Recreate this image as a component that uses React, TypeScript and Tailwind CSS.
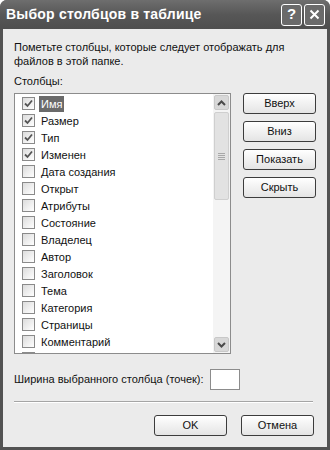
const columns = [
  { name: 'Имя', checked: true },
  { name: 'Размер', checked: true },
  { name: 'Тип', checked: true },
  { name: 'Изменен', checked: true },
  { name: 'Дата создания', checked: false },
  { name: 'Открыт', checked: false },
  { name: 'Атрибуты', checked: false },
  { name: 'Состояние', checked: false },
  { name: 'Владелец', checked: false },
  { name: 'Автор', checked: false },
  { name: 'Заголовок', checked: false },
  { name: 'Тема', checked: false },
  { name: 'Категория', checked: false },
  { name: 'Страницы', checked: false },
  { name: 'Комментарий', checked: false },
  // partially scrolled out, only the box top shows
  { name: '', checked: false },
];

function CheckBox({ checked }: { checked: boolean }) {
  return (
    <span className="w-[13px] h-[13px] shrink-0 border border-[#8a8a8a] bg-gradient-to-br from-[#dcdcdc] to-white flex items-center justify-center">
      {checked && (
        <svg width="9" height="9" viewBox="0 0 9 9">
          <path d="M1 4.5 L3.5 7 L8 1.5" fill="none" stroke="#555" strokeWidth="1.8" />
        </svg>
      )}
    </span>
  );
}

function Button({ children, className = '' }: { children: React.ReactNode; className?: string }) {
  return (
    <button className={`h-[21px] w-[73px] rounded-[3px] border border-[#3c3c3c] bg-gradient-to-b from-white to-[#e4e4e4] text-[11px] text-[#111] flex items-center justify-center ${className}`}>
      {children}
    </button>
  );
}

function ScrollArrow({ up }: { up: boolean }) {
  return (
    <div className="h-[15px] w-[15px] rounded-[2px] border border-[#c8c8c8] bg-[#d8d8d8] flex items-center justify-center">
      <svg width="9" height="6" viewBox="0 0 9 6">
        <path d={up ? 'M1 5 L4.5 1.5 L8 5' : 'M1 1 L4.5 4.5 L8 1'} fill="none" stroke="#4a4a4a" strokeWidth="2" />
      </svg>
    </div>
  );
}

export default function App() {
  return (
    <div className="w-[330px] h-[450px] bg-[#525252] rounded-t-[7px] flex flex-col overflow-hidden [font-family:'Liberation_Sans',Arial,sans-serif]">
      {/* Title bar */}
      <div className="h-[29px] shrink-0 flex items-center pl-[6px] pr-[5px] bg-gradient-to-b from-[#6e6e6e] via-[#575757] to-[#4e4e4e]">
        <span className="flex-1 text-white font-bold text-[14px] tracking-[0.2px]">Выбор столбцов в таблице</span>
        <div className="flex gap-[2px]">
          <div className="w-[21px] h-[22px] rounded-[3px] border border-white bg-[#6a6a6a] flex items-center justify-center text-white font-bold text-[15px]">?</div>
          <div className="w-[21px] h-[22px] rounded-[3px] border border-white bg-[#6a6a6a] flex items-center justify-center">
            <svg width="11" height="11" viewBox="0 0 11 11">
              <path d="M1.5 1.5 L9.5 9.5 M9.5 1.5 L1.5 9.5" stroke="white" strokeWidth="2" />
            </svg>
          </div>
        </div>
      </div>

      {/* Body */}
      <div className="flex-1 mx-[3px] mb-[3px] bg-[#ebebeb] px-[11px] pt-[11px] flex flex-col text-[11px] text-[#111]">
        <p className="leading-[14px]">
          Пометьте столбцы, которые следует отображать для
          <br />
          файлов в этой папке.
        </p>
        <div className="mt-[6px] leading-[14px]">Столбцы:</div>

        <div className="mt-[5px] flex gap-[12px]">
          {/* List */}
          <div className="w-[217px] h-[261px] border border-[#8c8c8c] bg-white flex overflow-hidden">
            <div className="flex-1 pt-[1px] pl-[7px] overflow-hidden">
              {columns.map((c, i) => (
                <div key={i} className="h-[17px] flex items-center gap-[4px]">
                  <CheckBox checked={c.checked} />
                  {c.name && (
                    <span className={`px-[2px] leading-[16px] ${i === 0 ? 'bg-[#6a6a6a] text-white' : ''}`}>{c.name}</span>
                  )}
                </div>
              ))}
            </div>
            <div className="w-[17px] py-[1px] pr-[1px] bg-[#f4f4f4] flex flex-col items-center">
              <ScrollArrow up />
              <div className="mt-[2px] h-[88px] w-[15px] rounded-[2px] border border-[#cfcfcf] bg-[#e2e2e2] flex flex-col items-center justify-center gap-[1px]">
                <span className="w-[7px] h-px bg-[#a8a8a8]" />
                <span className="w-[7px] h-px bg-[#a8a8a8]" />
                <span className="w-[7px] h-px bg-[#a8a8a8]" />
                <span className="w-[7px] h-px bg-[#a8a8a8]" />
              </div>
              <div className="flex-1" />
              <ScrollArrow up={false} />
            </div>
          </div>

          {/* Side buttons */}
          <div className="flex flex-col gap-[7px]">
            <Button>Вверх</Button>
            <Button>Вниз</Button>
            <Button>Показать</Button>
            <Button>Скрыть</Button>
          </div>
        </div>

        <div className="mt-[15px] flex items-center gap-[6px]">
          <span>Ширина выбранного столбца (точек):</span>
          <div className="w-[30px] h-[21px] border border-[#8c8c8c] bg-white" />
        </div>

        <div className="mt-[11px] mr-[3px] border-t border-[#a5a5a5] border-b border-b-white" />

        <div className="mt-[12px] flex justify-end gap-[14px] pr-[2px]">
          <Button>OK</Button>
          <Button>Отмена</Button>
        </div>
      </div>
    </div>
  );
}
